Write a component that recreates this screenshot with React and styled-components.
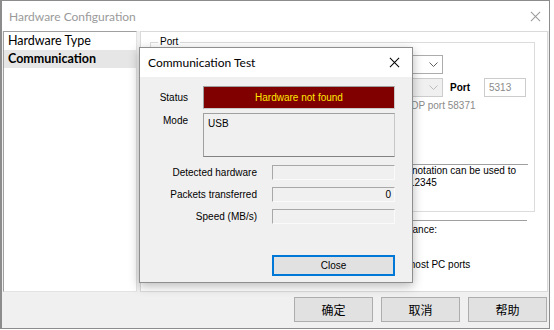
import React from "react";
import styled, { createGlobalStyle } from "styled-components";

const UI_FONT = `"Lato", "Noto Sans CJK SC", sans-serif`;
const DLG_FONT = `"Liberation Sans", Arial, sans-serif`;

const Global = createGlobalStyle`
  html, body { margin: 0; padding: 0; background: #ffffff; }
  body { font-family: ${DLG_FONT}; font-size: 10px; color: #000; }
  * { box-sizing: border-box; }
`;

const Window = styled.div`
  position: relative;
  width: 550px;
  height: 329px;
  border: 1px solid #8c8c8c;
  border-left-width: 2px;
  display: flex;
  flex-direction: column;
  background: #f0f0f0;
  overflow: hidden;
`;

const TitleBar = styled.div`
  height: 30px;
  flex: none;
  background: #fff;
  display: flex;
  align-items: center;
  justify-content: space-between;
  padding: 0 6px 0 7px;
  color: #9a9a9a;
  font-family: ${UI_FONT};
  font-size: 12px;
`;

const CloseGlyph = styled.svg`
  width: 12px;
  height: 12px;
  margin-right: 2px;
`;

const Body = styled.div`
  flex: 1;
  display: flex;
  flex-direction: column;
  padding: 0 0 0 1px;
`;

const MainRow = styled.div`
  height: 261px;
  display: flex;
  gap: 3px;
`;

const TreeList = styled.div`
  width: 134px;
  background: #fff;
  border: 1px solid #a0a0a0;
  border-right-color: #e3e3e3;
  border-bottom-color: #e3e3e3;
  display: flex;
  flex-direction: column;
`;

const TreeItem = styled.div`
  height: 18px;
  line-height: 18px;
  padding-left: 4px;
  font-family: ${UI_FONT};
  font-size: 12.5px;
  font-weight: ${(p) => (p.$selected ? 700 : 400)};
  background: ${(p) => (p.$selected ? "#e6e6e6" : "transparent")};
`;

const Page = styled.div`
  width: 408px;
  background: #fff;
  border: 1px solid #dadada;
  padding: 4px 12px 0 9px;
  display: flex;
  flex-direction: column;
`;

const GroupBox = styled.fieldset`
  margin: 0;
  height: 176px;
  border: 1px solid #dcdcdc;
  padding: 7px 6px 0 8px;
  position: relative;
  min-width: 0;
`;

const Legend = styled.legend`
  padding: 0 2px;
  margin-left: -1px;
  font-size: 10px;
  line-height: 12px;
`;

const FieldRow = styled.div`
  display: flex;
  align-items: center;
  height: 19px;
  margin-top: ${(p) => p.$mt || 0}px;
`;

const Combo = styled.div`
  width: 230px;
  height: 19px;
  margin-left: 54px;
  border: 1px solid ${(p) => (p.$disabled ? "#cccccc" : "#acacac")};
  background: ${(p) => (p.$disabled ? "#f0f0f0" : "#fff")};
  display: flex;
  align-items: center;
  justify-content: flex-end;
  padding-right: 4px;
`;

const FieldLabel = styled.span`
  font-weight: 700;
  margin-left: 7px;
  width: 34px;
  font-size: 10px;
`;

const TextBox = styled.div`
  width: 42px;
  height: 19px;
  border: 1px solid #cccccc;
  color: #8a8a8a;
  padding-left: 4px;
  line-height: 17px;
  font-size: 10px;
`;

const GrayNote = styled.div`
  color: #8a8a8a;
  margin-left: 245px;
  margin-top: 2px;
  font-size: 10px;
  line-height: 14px;
`;

const Separator = styled.div`
  height: 1px;
  background: #a0a0a0;
  margin-top: ${(p) => p.$mt || 0}px;
  margin-right: ${(p) => p.$mr || 0}px;
`;

const Note = styled.div`
  font-size: 10px;
  line-height: 12px;
  padding-left: ${(p) => p.$pl || 0}px;
  margin-top: ${(p) => p.$mt || 0}px;
  white-space: nowrap;
`;

const ButtonBar = styled.div`
  flex: 1;
  display: flex;
  justify-content: flex-end;
  align-items: flex-start;
  gap: 8px;
  padding: 5px 2px 0 0;
`;

const WinButton = styled.button`
  width: 79px;
  height: 25px;
  background: #e1e1e1;
  border: 1px solid #adadad;
  font-family: "Noto Sans CJK SC", sans-serif;
  font-size: 12px;
  color: #000;
  padding: 0;
`;

/* ---------- Dialog overlay ---------- */

const Dialog = styled.div`
  position: absolute;
  left: 137px;
  top: 46px;
  width: 274px;
  height: 236px;
  background: #f0f0f0;
  border: 1px solid #8e8e8e;
  box-shadow: 0 3px 10px rgba(0, 0, 0, 0.28);
  display: flex;
  flex-direction: column;
`;

const DialogTitle = styled.div`
  height: 29px;
  flex: none;
  background: #fff;
  display: flex;
  align-items: center;
  justify-content: space-between;
  padding: 0 10px 0 8px;
  font-family: ${UI_FONT};
  font-size: 12px;
`;

const DialogContent = styled.div`
  flex: 1;
  display: flex;
  flex-direction: column;
  padding: 9px 17px 0 0;
`;

const TopGrid = styled.div`
  display: grid;
  grid-template-columns: 47px 192px;
  column-gap: 15px;
  row-gap: 4px;
  padding-left: 1px;
`;

const Label = styled.div`
  text-align: right;
  font-size: 10px;
  align-self: ${(p) => (p.$top ? "start" : "center")};
  line-height: 14px;
  padding-top: ${(p) => (p.$top ? 1 : 0)}px;
  white-space: nowrap;
`;

const StatusBox = styled.div`
  height: 23px;
  background: #800000;
  border: 1px solid #c8c8c8;
  border-top-color: #a0a0a0;
  border-left-color: #a0a0a0;
  color: #ffe800;
  display: flex;
  align-items: center;
  justify-content: center;
  font-size: 10px;
`;

const ModeBox = styled.div`
  height: 44px;
  border: 1px solid #a0a0a0;
  border-right-color: #c8c8c8;
  border-bottom-color: #828282;
  padding: 3px 4px;
  font-size: 10px;
  line-height: 14px;
`;

const InfoGrid = styled.div`
  display: grid;
  grid-template-columns: 116px 123px;
  column-gap: 15px;
  row-gap: 7px;
  margin-top: 8px;
  padding-left: 1px;
`;

const InfoBox = styled.div`
  height: 15px;
  border: 1px solid #fafafa;
  border-top-color: #a8a8a8;
  border-left-color: #a8a8a8;
  text-align: right;
  padding-right: 3px;
  font-size: 10px;
  line-height: 13px;
`;

const CloseButton = styled.button`
  align-self: flex-end;
  width: 123px;
  height: 21px;
  margin-top: 31px;
  background: #e1e1e1;
  border: 2px solid #0078d7;
  font-family: ${DLG_FONT};
  font-size: 10px;
  padding: 0;
  color: #000;
`;

const XIcon = ({ color = "#000", size = 12 }) => (
  <CloseGlyph viewBox="0 0 12 12" style={{ width: size, height: size }}>
    <path d="M1 1 L11 11 M11 1 L1 11" stroke={color} strokeWidth="1.1" fill="none" />
  </CloseGlyph>
);

const Chevron = ({ color }) => (
  <svg width="9" height="6" viewBox="0 0 9 6">
    <path d="M0.5 0.5 L4.5 4.5 L8.5 0.5" stroke={color} strokeWidth="1" fill="none" />
  </svg>
);

export default function App() {
  return (
    <>
      <Global />
      <Window>
        <TitleBar>
          <span>Hardware Configuration</span>
          <XIcon color="#9a9a9a" size={11} />
        </TitleBar>
        <Body>
          <MainRow>
            <TreeList>
              <TreeItem>Hardware Type</TreeItem>
              <TreeItem $selected>Communication</TreeItem>
            </TreeList>
            <Page>
              <GroupBox>
                <Legend>Port</Legend>
                <FieldRow $mt={0}>
                  <Combo>
                    <Chevron color="#606060" />
                  </Combo>
                </FieldRow>
                <FieldRow $mt={4}>
                  <Combo $disabled>
                    <Chevron color="#bcbcbc" />
                  </Combo>
                  <FieldLabel>Port</FieldLabel>
                  <TextBox>5313</TextBox>
                </FieldRow>
                <GrayNote>UDP port 58371</GrayNote>
                <Separator $mt={51} $mr={0} />
                <Note $pl={253} $mt={0}>notation can be used to</Note>
                <Note $pl={250} $mt={0}>12345</Note>
              </GroupBox>
              <Separator $mt={8} $mr={8} />
              <Note $pl={227} $mt={3}>Performance:</Note>
              <Note $pl={257} $mt={23}>most PC ports</Note>
            </Page>
          </MainRow>
          <ButtonBar>
            <WinButton>确定</WinButton>
            <WinButton>取消</WinButton>
            <WinButton>帮助</WinButton>
          </ButtonBar>
        </Body>
        <Dialog>
          <DialogTitle>
            <span>Communication Test</span>
            <XIcon color="#000" size={11} />
          </DialogTitle>
          <DialogContent>
            <TopGrid>
              <Label>Status</Label>
              <StatusBox>Hardware not found</StatusBox>
              <Label $top>Mode</Label>
              <ModeBox>USB</ModeBox>
            </TopGrid>
            <InfoGrid>
              <Label>Detected hardware</Label>
              <InfoBox />
              <Label>Packets transferred</Label>
              <InfoBox>0</InfoBox>
              <Label>Speed (MB/s)</Label>
              <InfoBox />
            </InfoGrid>
            <CloseButton>Close</CloseButton>
          </DialogContent>
        </Dialog>
      </Window>
    </>
  );
}
